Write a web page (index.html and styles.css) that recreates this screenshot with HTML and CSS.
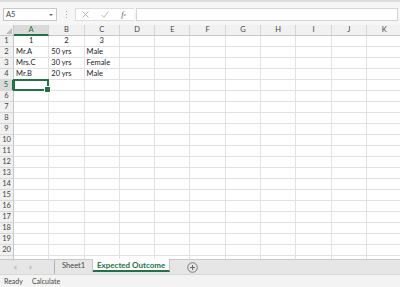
FILE: index.html
```html
<!DOCTYPE html>
<html>
<head>
<meta charset="utf-8">
<link rel="stylesheet" href="styles.css">
</head>
<body>
<div class="app">
  <div class="fbar">
    <div class="namebox"><span>A5</span><span class="caret"></span></div>
    <div class="grip"><i></i><i></i><i></i></div>
    <div class="fbtns">
      <span class="fb"><svg width="7" height="7" viewBox="0 0 7 7"><path d="M0.5 0.5L6.5 6.5M6.5 0.5L0.5 6.5" stroke="#b4b4b4" stroke-width="1" fill="none"/></svg></span>
      <span class="fb"><svg width="8" height="7" viewBox="0 0 8 7"><path d="M0.5 3.8L2.8 6.2L7.5 0.6" stroke="#b4b4b4" stroke-width="1" fill="none"/></svg></span>
      <span class="fb fx">f<sub>x</sub></span>
    </div>
    <div class="finput"></div>
  </div>
  <div class="sheet">
    <div class="row hdr"><span class="corner"></span><span class="csel">A</span><span>B</span><span>C</span><span>D</span><span>E</span><span>F</span><span>G</span><span>H</span><span>I</span><span>J</span><span>K</span></div>
    <div class="row"><span class="rh">1</span><span class="ctr">1</span><span class="ctr">2</span><span class="ctr">3</span><span></span><span></span><span></span><span></span><span></span><span></span><span></span><span></span></div>
    <div class="row"><span class="rh">2</span><span>Mr.A</span><span>50 yrs</span><span>Male</span><span></span><span></span><span></span><span></span><span></span><span></span><span></span><span></span></div>
    <div class="row"><span class="rh">3</span><span>Mrs.C</span><span>30 yrs</span><span>Female</span><span></span><span></span><span></span><span></span><span></span><span></span><span></span><span></span></div>
    <div class="row"><span class="rh">4</span><span>Mr.B</span><span>20 yrs</span><span>Male</span><span></span><span></span><span></span><span></span><span></span><span></span><span></span><span></span></div>
    <div class="row"><span class="rh rsel">5</span><span class="sel"></span><span></span><span></span><span></span><span></span><span></span><span></span><span></span><span></span><span></span><span></span></div>
    <div class="row"><span class="rh">6</span><span></span><span></span><span></span><span></span><span></span><span></span><span></span><span></span><span></span><span></span><span></span></div>
    <div class="row"><span class="rh">7</span><span></span><span></span><span></span><span></span><span></span><span></span><span></span><span></span><span></span><span></span><span></span></div>
    <div class="row"><span class="rh">8</span><span></span><span></span><span></span><span></span><span></span><span></span><span></span><span></span><span></span><span></span><span></span></div>
    <div class="row"><span class="rh">9</span><span></span><span></span><span></span><span></span><span></span><span></span><span></span><span></span><span></span><span></span><span></span></div>
    <div class="row"><span class="rh">10</span><span></span><span></span><span></span><span></span><span></span><span></span><span></span><span></span><span></span><span></span><span></span></div>
    <div class="row"><span class="rh">11</span><span></span><span></span><span></span><span></span><span></span><span></span><span></span><span></span><span></span><span></span><span></span></div>
    <div class="row"><span class="rh">12</span><span></span><span></span><span></span><span></span><span></span><span></span><span></span><span></span><span></span><span></span><span></span></div>
    <div class="row"><span class="rh">13</span><span></span><span></span><span></span><span></span><span></span><span></span><span></span><span></span><span></span><span></span><span></span></div>
    <div class="row"><span class="rh">14</span><span></span><span></span><span></span><span></span><span></span><span></span><span></span><span></span><span></span><span></span><span></span></div>
    <div class="row"><span class="rh">15</span><span></span><span></span><span></span><span></span><span></span><span></span><span></span><span></span><span></span><span></span><span></span></div>
    <div class="row"><span class="rh">16</span><span></span><span></span><span></span><span></span><span></span><span></span><span></span><span></span><span></span><span></span><span></span></div>
    <div class="row"><span class="rh">17</span><span></span><span></span><span></span><span></span><span></span><span></span><span></span><span></span><span></span><span></span><span></span></div>
    <div class="row"><span class="rh">18</span><span></span><span></span><span></span><span></span><span></span><span></span><span></span><span></span><span></span><span></span><span></span></div>
    <div class="row"><span class="rh">19</span><span></span><span></span><span></span><span></span><span></span><span></span><span></span><span></span><span></span><span></span><span></span></div>
    <div class="row"><span class="rh">20</span><span></span><span></span><span></span><span></span><span></span><span></span><span></span><span></span><span></span><span></span><span></span></div>
    <div class="row"><span class="rh"></span><span></span><span></span><span></span><span></span><span></span><span></span><span></span><span></span><span></span><span></span><span></span></div>
  </div>
  <div class="tabs">
    <div class="nav">
      <svg width="4" height="5" viewBox="0 0 4 5"><path d="M3.5 0L0.5 2.5L3.5 5Z" fill="#c4c4c4"/></svg>
      <svg width="4" height="5" viewBox="0 0 4 5"><path d="M0.5 0L3.5 2.5L0.5 5Z" fill="#c4c4c4"/></svg>
    </div>
    <div class="tab">Sheet1</div>
    <div class="tab active">Expected Outcome</div>
    <div class="add"><svg width="11" height="11" viewBox="0 0 11 11"><circle cx="5.5" cy="5.5" r="4.8" stroke="#7a7a7a" stroke-width="1" fill="none"/><path d="M5.5 3V8M3 5.5H8" stroke="#6a6a6a" stroke-width="1"/></svg></div>
  </div>
  <div class="status"><span>Ready</span><span class="calc">Calculate</span></div>
</div>
</body>
</html>
```
FILE: styles.css
```css
* { box-sizing: border-box; margin: 0; padding: 0; }
html, body { width: 400px; height: 287px; overflow: hidden; }
body { font-family: Lato, "Open Sans", sans-serif; background: #fff; color: #222; }
.app { display: flex; flex-direction: column; height: 287px; width: 400px; }

.fbar { height: 25px; flex: none; background: #f6f6f6; border-top: 2px solid #dcdcdc; display: flex; align-items: flex-start; padding: 6px 2px 0 3px; }
.namebox { width: 54px; height: 13px; background: #fff; border: 1px solid #c9c9c9; display: flex; align-items: center; justify-content: space-between; padding: 0 3px 0 2px; font-size: 7.5px; color: #444; }
.caret { width: 0; height: 0; border-left: 2px solid transparent; border-right: 2px solid transparent; border-top: 2px solid #666; }
.grip { margin-left: 9px; width: 2px; display: flex; flex-direction: column; gap: 2px; padding-top: 3px; }
.grip i { display: block; width: 1px; height: 1px; background: #a8a8a8; }
.fbtns { margin-left: 7px; width: 59px; height: 13px; background: #fff; border: 1px solid #dcdcdc; border-right: none; display: flex; align-items: center; }
.fb { width: 19px; display: flex; justify-content: center; align-items: center; height: 11px; }
.fx { font-family: "Liberation Serif", serif; font-style: italic; font-size: 8px; color: #555; line-height: 1; }
.fx sub { font-size: 5px; vertical-align: -1px; }
.finput { margin-left: 2px; flex: 1; height: 13px; background: #fff; border: 1px solid #d4d4d4; }

.sheet { flex: none; height: 234px; overflow: hidden; background: #fff; }
.row { display: grid; grid-template-columns: 14px repeat(11, 35.3px); height: 11px; }
.row > span { border-right: 1px solid #e2e2e2; border-bottom: 1px solid #e2e2e2; font-size: 7.5px; line-height: 10px; padding-left: 2px; white-space: nowrap; overflow: hidden; color: #222; }
.row > span.ctr { text-align: center; padding-left: 0; }
.hdr > span { background: #f1f1f1; border-right-color: #d6d6d6; border-bottom-color: #c6c6c6; text-align: center; color: #444; padding-left: 0; }
.row > span.rh { background: #f1f1f1; border-right-color: #c6c6c6; border-bottom-color: #d8d8d8; text-align: center; color: #444; padding-left: 0; }
.hdr > span.corner { position: relative; border-right-color: #c6c6c6; }
.corner::after { content: ""; position: absolute; right: 1px; bottom: 1px; width: 0; height: 0; border-left: 6px solid transparent; border-bottom: 6px solid #bcbcbc; }
.hdr > span.csel { background: #dadada; border-bottom: 2px solid #217346; color: #1e6b41; }
.row > span.rsel { background: #dadada; border-right: 2px solid #217346; color: #1e6b41; }
.row > span.sel { position: relative; overflow: visible; }
.sel::after { content: ""; position: absolute; left: -1px; top: -1px; right: -1px; bottom: -1px; border: 2px solid #217346; }
.sel::before { content: ""; position: absolute; right: -3px; bottom: -3px; width: 5px; height: 5px; background: #217346; border: 1px solid #fff; z-index: 2; }

.tabs { height: 15px; flex: none; background: #e6e6e6; border-top: 1px solid #c8c8c8; display: flex; align-items: flex-start; }
.nav { width: 55px; height: 14px; display: flex; align-items: center; padding-left: 13px; gap: 12px; border-right: 1px solid #b4b4b4; }
.tab { height: 12px; padding: 0 7px; font-size: 7.5px; line-height: 12px; color: #444; border-right: 1px solid #c4c4c4; }
.tab:first-of-type { width: 35px; padding: 0; text-align: center; }
.tab.active { width: 77px; height: 13px; margin-top: -1px; background: #fff; color: #217346; font-weight: bold; font-size: 8px; text-align: center; padding: 0; border-bottom: 2px solid #217346; border-right: 1px solid #c4c4c4; line-height: 12px; }
.add { margin-left: 17px; height: 14px; display: flex; align-items: center; }

.status { height: 13px; flex: none; background: #f3f3f3; border-top: 1px solid #d8d8d8; display: flex; align-items: center; padding-left: 4px; font-size: 7px; color: #444; }
.calc { margin-left: 9px; }
```
